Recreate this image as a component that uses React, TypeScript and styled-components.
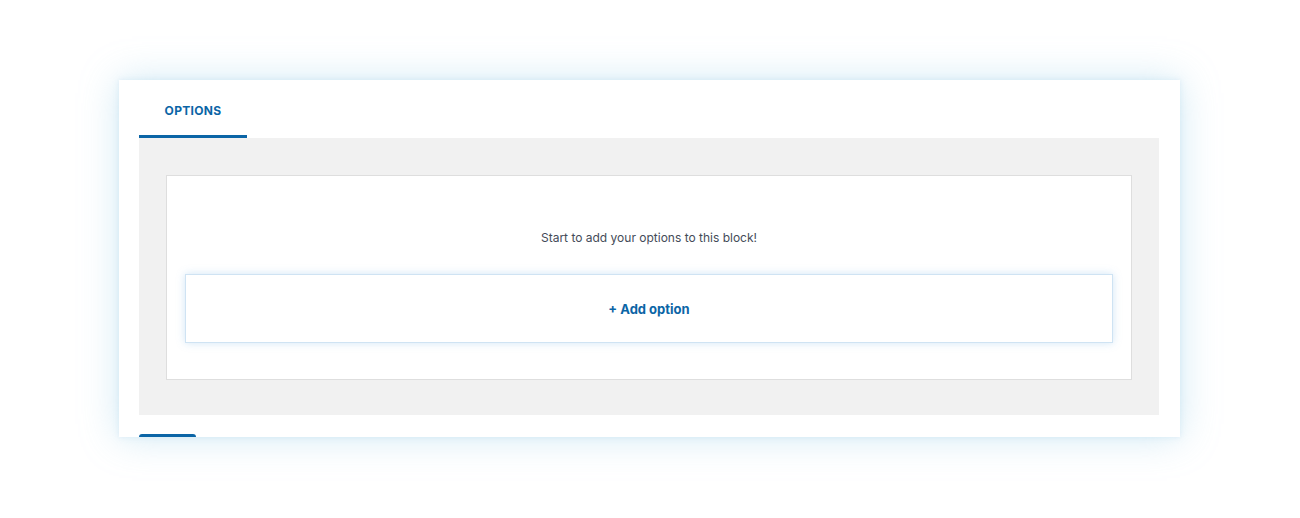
import styled, { createGlobalStyle } from 'styled-components';

const GlobalStyle = createGlobalStyle`
  html, body {
    margin: 0;
    padding: 0;
    background: #ffffff;
    font-family: Inter, "Liberation Sans", sans-serif;
  }
`;

const Page = styled.div`
  width: 1300px;
  height: 518px;
  padding: 80px 120px 0 119px;
  box-sizing: border-box;
`;

const Card = styled.div`
  height: 357px;
  background: #fff;
  padding: 0 21px 0 20px;
  overflow: hidden;
  box-shadow: 0 0 36px rgba(140, 200, 230, 0.4), 0 0 6px rgba(160, 205, 230, 0.3);
`;

const TabBar = styled.div`
  display: flex;
  height: 58px;
`;

const Tab = styled.div<{ $active?: boolean }>`
  width: 108px;
  display: flex;
  align-items: center;
  justify-content: center;
  padding-top: 6px;
  box-sizing: border-box;
  font-size: 12px;
  font-weight: 700;
  letter-spacing: 0.3px;
  color: #0b65a6;
  border-bottom: 3px solid ${(p) => (p.$active ? '#0b65a6' : 'transparent')};
`;

const Panel = styled.div`
  background: #f1f1f1;
  padding: 37px 27px 35px;
`;

const Box = styled.div`
  background: #fff;
  border: 1px solid #dedede;
  padding: 0 18px 36px;
`;

const Hint = styled.p`
  margin: 0;
  height: 98px;
  display: flex;
  align-items: center;
  justify-content: center;
  padding-top: 24px;
  box-sizing: border-box;
  font-size: 12px;
  color: #444b58;
`;

const AddButton = styled.button`
  display: flex;
  width: 100%;
  height: 69px;
  align-items: center;
  justify-content: center;
  background: #fff;
  border: 1px solid #cfe3f3;
  box-shadow: 0 0 8px rgba(120, 180, 230, 0.35);
  font-family: inherit;
  font-size: 13px;
  font-weight: 700;
  color: #0b65a6;
  cursor: pointer;
`;

const Footer = styled.div`
  padding-top: 19px;
`;

const SaveButton = styled.div`
  width: 57px;
  height: 30px;
  border-top: 3px solid #0b65a6;
  border-radius: 3px 3px 0 0;
`;

export default function App() {
  return (
    <>
      <GlobalStyle />
      <Page>
        <Card>
          <TabBar>
            <Tab $active>OPTIONS</Tab>
          </TabBar>
          <Panel>
            <Box>
              <Hint>Start to add your options to this block!</Hint>
              <AddButton>+ Add option</AddButton>
            </Box>
          </Panel>
          <Footer>
            <SaveButton />
          </Footer>
        </Card>
      </Page>
    </>
  );
}
